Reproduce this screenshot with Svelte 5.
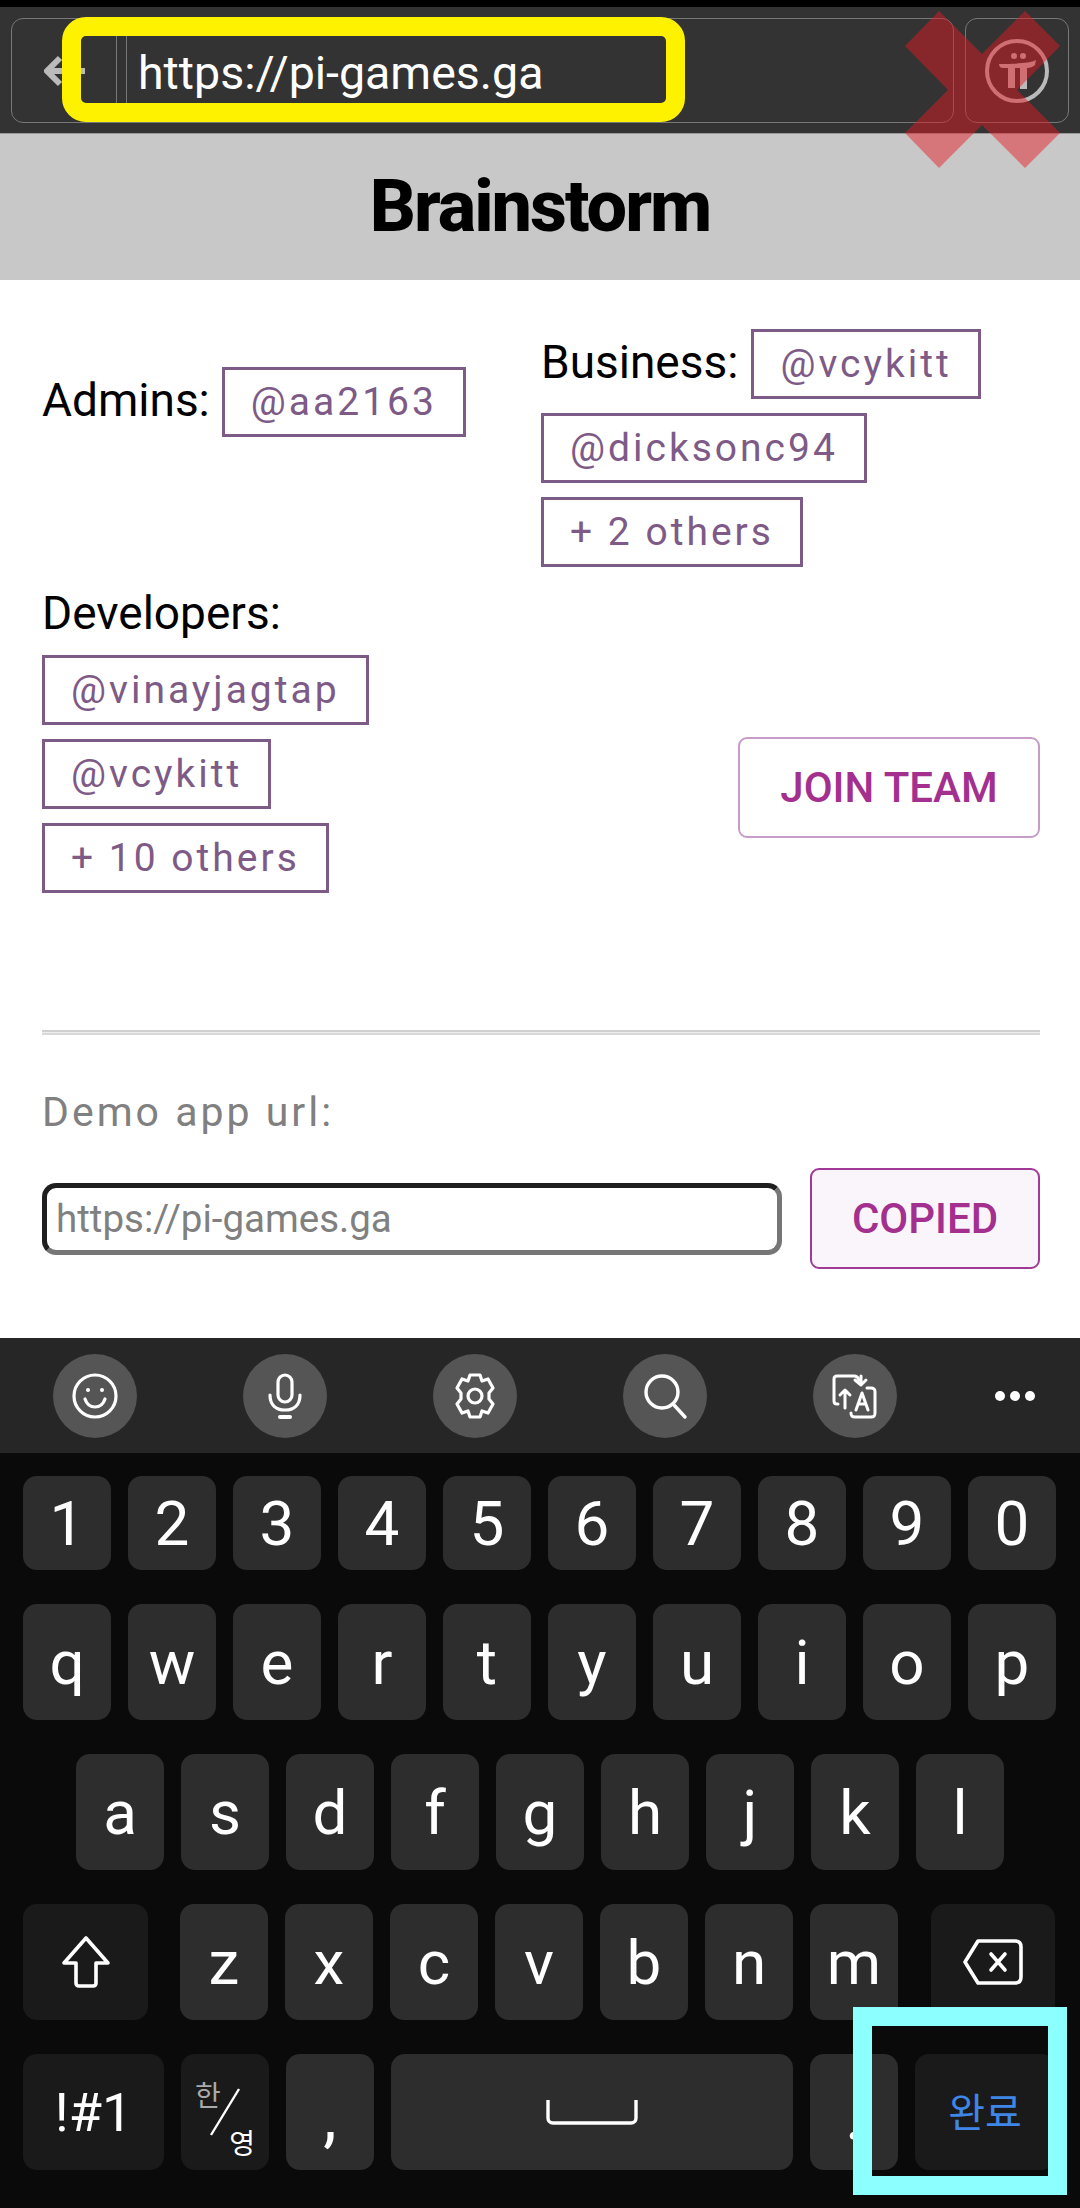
<script>
	const numbers = ['1', '2', '3', '4', '5', '6', '7', '8', '9', '0'];
	const top = ['q', 'w', 'e', 'r', 't', 'y', 'u', 'i', 'o', 'p'];
	const home = ['a', 's', 'd', 'f', 'g', 'h', 'j', 'k', 'l'];
	const bottom = ['z', 'x', 'c', 'v', 'b', 'n', 'm'];
</script>

<div class="screen">
	<div class="browser-bar">
		<div class="nav-box">
			<svg class="back" viewBox="0 0 42 32" width="42" height="32">
				<path d="M16 3 3 16l13 13M3 16h38" fill="none" stroke="#bbb" stroke-width="6" />
			</svg>
			<span class="divider"></span>
			<span class="divider second"></span>
			<span class="url">https://pi-games.ga</span>
		</div>
		<div class="pi-box">
			<svg viewBox="0 0 68 68" width="68" height="68">
				<circle cx="34" cy="34" r="30" fill="none" stroke="#bbb" stroke-width="4" />
				<circle cx="31" cy="19" r="3" fill="#bbb" />
				<circle cx="40" cy="19" r="3" fill="#bbb" />
				<path d="M16 27c6 0 30 0 37-4l-1 5c-2 2-5 3-8 3v21h-7V31h-5v20h-7V31h-5c-3 0-4-2-4-4z" fill="#bbb" />
			</svg>
		</div>
	</div>

	<h1>Brainstorm</h1>

	<main>
		<div class="teams">
			<div class="team admins">
				<span class="label">Admins:</span>
				<span class="tag">@aa2163</span>
			</div>
			<div class="team business">
				<span class="label">Business:</span>
				<span class="tag">@vcykitt</span>
				<span class="tag">@dicksonc94</span>
				<span class="tag">+ 2 others</span>
			</div>
		</div>

		<div class="dev-row">
			<div class="team developers">
				<span class="label">Developers:</span>
				<span class="tag">@vinayjagtap</span>
				<span class="tag">@vcykitt</span>
				<span class="tag">+ 10 others</span>
			</div>
			<button class="join">JOIN TEAM</button>
		</div>

		<hr />

		<p class="demo-label">Demo app url:</p>
		<div class="demo-row">
			<input type="text" placeholder="https://pi-games.ga" />
			<button class="copied">COPIED</button>
		</div>
	</main>

	<div class="kb-tools">
		<span class="tool">
			<svg viewBox="0 0 48 48" width="48" height="48" fill="none" stroke="#fff" stroke-width="3.2">
				<circle cx="24" cy="24" r="21" />
				<path d="M14 27c2 6 6 8 10 8s8-2 10-8" stroke-linecap="round" />
				<circle cx="17" cy="18" r="2" fill="#fff" stroke="none" />
				<circle cx="31" cy="18" r="2" fill="#fff" stroke="none" />
			</svg>
		</span>
		<span class="tool">
			<svg viewBox="0 0 48 48" width="48" height="48" fill="none" stroke="#fff" stroke-width="3.2" stroke-linecap="round">
				<rect x="17" y="3" width="14" height="27" rx="7" />
				<path d="M9 23c0 10 6 15 15 15s15-5 15-15" />
				<path d="M19 45h10" stroke-width="4" />
			</svg>
		</span>
		<span class="tool">
			<svg viewBox="0 0 48 48" width="48" height="48" fill="none" stroke="#fff" stroke-width="3.2" stroke-linejoin="round">
				<path d="M19 3h10l2 6 6-2 5 9-4 5v6l4 5-5 9-6-2-2 6H19l-2-6-6 2-5-9 4-5v-6l-4-5 5-9 6 2z" />
				<circle cx="24" cy="24" r="7" />
			</svg>
		</span>
		<span class="tool">
			<svg viewBox="0 0 48 48" width="48" height="48" fill="none" stroke="#fff" stroke-width="3.4" stroke-linecap="round">
				<circle cx="21" cy="20" r="16" />
				<path d="m33 33 11 12" />
			</svg>
		</span>
		<span class="tool">
			<svg viewBox="0 0 48 48" width="48" height="48" fill="none" stroke="#fff" stroke-width="3" stroke-linecap="round" stroke-linejoin="round">
				<path d="M7 32H6c-2 0-3-1-3-3V7c0-2 1-3 3-3h17c3 0 4 1 5 4" />
				<path d="m24 8 6 5 5-5M30 4v9" />
				<path d="M14 36V18m-5 5 5-5 5 5" />
				<path d="M36 16h4c3 0 4 1 4 4v21c0 3-1 4-4 4H24c-3 0-4-1-4-4" />
				<path d="m25 38 6-17 6 17m-10-6h8" />
			</svg>
		</span>
		<span class="more">
			<i></i><i></i><i></i>
		</span>
	</div>

	<div class="keyboard">
		<div class="row nums">
			{#each numbers as k}
				<span class="key">{k}</span>
			{/each}
		</div>
		<div class="row">
			{#each top as k}
				<span class="key">{k}</span>
			{/each}
		</div>
		<div class="row home">
			{#each home as k}
				<span class="key">{k}</span>
			{/each}
		</div>
		<div class="row">
			<span class="key fn shift">
				<svg viewBox="0 0 50 54" width="50" height="54">
					<path d="M25 3 47 28H35v20c0 2-1 3-3 3H18c-2 0-3-1-3-3V28H3z" fill="none" stroke="#fff" stroke-width="3.6" stroke-linejoin="round" />
				</svg>
			</span>
			{#each bottom as k}
				<span class="key">{k}</span>
			{/each}
			<span class="key fn del">
				<svg viewBox="0 0 60 48" width="60" height="48" fill="none" stroke="#fff" stroke-width="3.6" stroke-linejoin="round">
					<path d="M15 3h37c4 0 6 2 6 6v30c0 4-2 6-6 6H15L2 24z" />
					<path d="m28 16 14 16m0-16L28 32" stroke-linecap="round" />
				</svg>
			</span>
		</div>
		<div class="row">
			<span class="key fn sym">!#1</span>
			<span class="key fn lang">
				<span class="han">한</span>
				<svg viewBox="0 0 40 50" width="40" height="50">
					<path d="M34 2 6 48" stroke="#fff" stroke-width="2.4" />
				</svg>
				<span class="eng">영</span>
			</span>
			<span class="key comma">,</span>
			<span class="key space">
				<svg viewBox="0 0 92 26" width="92" height="26">
					<path d="M2 1v18c0 3 2 5 5 5h78c3 0 5-2 5-5V1" fill="none" stroke="#fff" stroke-width="3.4" />
				</svg>
			</span>
			<span class="key comma">.</span>
			<span class="key fn done">완료</span>
		</div>
	</div>

	<!-- annotations drawn over the screenshot -->
	<div class="mark-yellow"></div>
	<div class="mark-cyan"></div>
	<svg class="mark-x" viewBox="0 0 1080 180" width="1080" height="180">
		<polygon points="939,11 982,54 1025,11 1060,46 1017,90 1060,133 1025,168 982,125 939,168 905,133 948,90 905,46" />
	</svg>
</div>

<style>
:global(body) {
	margin: 0;
	background: #000;
}
.screen {
	position: relative;
	width: 1080px;
	height: 2208px;
	padding-top: 7px;
	box-sizing: border-box;
	background: #fff;
	overflow: hidden;
	font-family: Roboto, "Noto Sans CJK KR", sans-serif;
	box-shadow: inset 0 7px 0 #000;
}
.browser-bar {
	height: 127px;
	box-sizing: border-box;
	padding: 11px 11px 10px;
	background: #333;
	border-bottom: 1px solid #999;
	display: flex;
	gap: 11px;
}
.nav-box,
.pi-box {
	border: 1px solid #777;
	border-radius: 12px;
	display: flex;
	align-items: center;
}
.nav-box {
	flex: 1;
	padding-left: 32px;
}
.pi-box {
	width: 104px;
	box-sizing: border-box;
	justify-content: center;
}
.back {
	margin-right: 30px;
}
.divider {
	width: 1px;
	align-self: stretch;
	background: #777;
}
.divider.second {
	margin-left: 9px;
}
.url {
	margin-left: 11px;
	padding-top: 4px;
	color: #fff;
	font-size: 46.5px;
}
h1 {
	margin: 0;
	height: 146px;
	background: #c8c8c8;
	color: #000;
	font-size: 72px;
	font-weight: 800;
	letter-spacing: -2px;
	line-height: 146px;
	text-align: center;
}
main {
	padding: 0 40px 0 42px;
	height: 1058px;
	box-sizing: border-box;
}
.teams {
	display: flex;
}
.team {
	display: flex;
	flex-wrap: wrap;
	align-items: center;
	gap: 14px 13px;
}
.admins {
	width: 499px;
	align-self: flex-start;
	margin-top: 87px;
	column-gap: 12px;
}
.admins .label {
	margin-bottom: 4px;
}
.business {
	flex: 1;
	margin-top: 49px;
	align-items: flex-start;
}
.business .label {
	line-height: 66px;
}
.label {
	color: #000;
	font-size: 46px;
}
.tag {
	height: 70px;
	box-sizing: border-box;
	padding: 0 26px;
	border: 3px solid #7e5a87;
	color: #7e5a87;
	font-size: 39px;
	letter-spacing: 3px;
	line-height: 64px;
}
.dev-row {
	display: flex;
	justify-content: space-between;
	align-items: flex-start;
	margin-top: 19px;
}
.developers {
	flex-direction: column;
	align-items: flex-start;
	gap: 14px;
	flex-wrap: nowrap;
}
.developers .label {
	margin-bottom: 1px;
}
.join {
	width: 302px;
	height: 101px;
	margin-top: 151px;
	border: 2px solid #c79cc6;
	border-radius: 9px;
	background: #fff;
	color: #a3308f;
	font: 500 42px Roboto, sans-serif;
}
hr {
	margin: 137px 0 0;
	height: 5px;
	box-sizing: border-box;
	border: 0;
	border-top: 2px solid #d0d0d0;
	border-bottom: 2px solid #d8d8d8;
	background: #eee;
}
.demo-label {
	margin: 53px 0 0;
	color: #808080;
	font-size: 41px;
	letter-spacing: 3px;
	line-height: 48px;
}
.demo-row {
	display: flex;
	align-items: center;
	justify-content: space-between;
	margin-top: 32px;
}
input {
	width: 740px;
	height: 72px;
	box-sizing: border-box;
	padding: 0 0 0 9px;
	border: 5px solid;
	border-color: #1f1f1f #767676 #767676 #1f1f1f;
	border-radius: 14px;
	font: 38.5px Roboto, sans-serif;
	background: #fff;
}
input::placeholder {
	color: #808080;
}
.copied {
	width: 230px;
	height: 101px;
	border: 2px solid #a03a96;
	border-radius: 9px;
	background: #faf5fb;
	color: #a3308f;
	font: 500 42px Roboto, sans-serif;
}
.kb-tools {
	height: 115px;
	background: #262626;
	display: flex;
	align-items: center;
	padding-left: 53px;
	gap: 106px;
}
.tool {
	width: 84px;
	height: 84px;
	border-radius: 50%;
	background: #555;
	display: flex;
	align-items: center;
	justify-content: center;
}
.more {
	display: flex;
	gap: 5px;
	margin-left: -8px;
}
.more i {
	width: 10px;
	height: 10px;
	border-radius: 50%;
	background: #fff;
}
.keyboard {
	height: 755px;
	box-sizing: border-box;
	padding: 23px 24px 0 23px;
	background: #0a0a0a;
	display: flex;
	flex-direction: column;
	gap: 34px;
}
.row {
	display: flex;
	gap: 17px;
	height: 116px;
}
.row.nums {
	height: 94px;
}
.row.home {
	padding-left: 53px;
}
.key {
	width: 88px;
	flex: none;
	border-radius: 14px;
	background: #2d2d2d;
	color: #fff;
	font-size: 62px;
	display: flex;
	align-items: center;
	justify-content: center;
}
.key.fn {
	background: #1a1a1a;
}
.shift {
	width: 125px;
	margin-right: 15px;
}
.del {
	width: 124px;
	margin-left: 16px;
}
.sym {
	width: 141px;
	font-size: 54px;
}
.lang {
	position: relative;
}
.han,
.eng {
	position: absolute;
	font-size: 28px;
}
.han {
	left: 14px;
	top: 20px;
	color: #aaa;
}
.eng {
	right: 14px;
	bottom: 8px;
}
.comma {
	align-items: flex-end;
	padding-bottom: 14px;
	box-sizing: border-box;
	font-size: 68px;
}
.space {
	width: 402px;
}
.key.done {
	width: 140px;
	color: #3f86e6;
	font-size: 40px;
	padding-bottom: 4px;
	box-sizing: border-box;
}
.mark-yellow,
.mark-cyan {
	position: absolute;
	box-sizing: border-box;
}
.mark-yellow {
	left: 62px;
	top: 17px;
	width: 623px;
	height: 105px;
	border: 19px solid #fff200;
	border-radius: 24px;
}
.mark-cyan {
	left: 853px;
	top: 2007px;
	width: 214px;
	height: 188px;
	border: 19px solid #8cffff;
}
.mark-x {
	position: absolute;
	left: 0;
	top: 0;
}
.mark-x polygon {
	fill: rgba(230, 25, 35, 0.47);
}
</style>
